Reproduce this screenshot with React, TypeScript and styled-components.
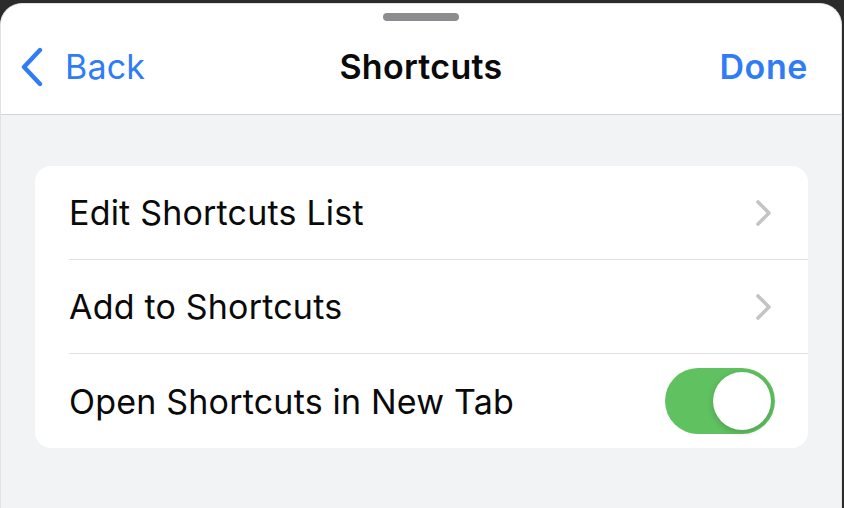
import React, { useState } from "react";
import styled, { createGlobalStyle } from "styled-components";

const Global = createGlobalStyle`
  html, body { margin: 0; padding: 0; background: #2b2b2b; }
  body { font-family: Inter, "Noto Sans", sans-serif; -webkit-font-smoothing: antialiased; }
`;

const Screen = styled.div`
  width: 844px;
  height: 508px;
  padding-top: 3px;
  padding-right: 2px;
  box-sizing: border-box;
  background: #2b2b2b;
  overflow: hidden;
`;

const Sheet = styled.div`
  height: 100%;
  background: #f2f3f5;
  border-radius: 22px 22px 0 0;
  border: 1px solid #e2e2e4;
  border-bottom: none;
  box-sizing: border-box;
  overflow: hidden;
  display: flex;
  flex-direction: column;
`;

const Header = styled.header`
  background: #ffffff;
  height: 111px;
  border-bottom: 1.5px solid #d4d4d6;
  box-sizing: border-box;
  display: flex;
  flex-direction: column;
  align-items: center;
`;

const Grabber = styled.div`
  width: 76px;
  height: 8px;
  border-radius: 4px;
  background: #8d8d8f;
  margin-top: 9px;
`;

const NavBar = styled.div`
  width: 100%;
  flex: 1;
  display: grid;
  grid-template-columns: 1fr auto 1fr;
  align-items: center;
  padding: 0 33px 2px 33px;
  box-sizing: border-box;
`;

const BackButton = styled.div`
  display: flex;
  align-items: center;
  gap: 20px;
  margin-left: -15px;
  color: #2f7cf6;
  font-size: 34px;
  letter-spacing: 0.2px;
`;

const Title = styled.div`
  font-size: 34px;
  font-weight: 600;
  color: #0a0a0a;
  letter-spacing: 0.3px;
`;

const Done = styled.div`
  justify-self: end;
  font-size: 34px;
  font-weight: 600;
  color: #2f7cf6;
  letter-spacing: 0.6px;
`;

const Content = styled.div`
  padding: 51px 33px 0 34px;
`;

const Card = styled.div`
  background: #ffffff;
  border-radius: 16px;
  overflow: hidden;
`;

const Row = styled.div<{ $last?: boolean }>`
  height: 94px;
  margin-left: 34px;
  padding-right: 34px;
  display: flex;
  align-items: center;
  justify-content: space-between;
  border-bottom: ${(p) => (p.$last ? "none" : "1.5px solid #e2e2e4")};
  box-sizing: border-box;
`;

const Label = styled.span`
  font-size: 34px;
  color: #0a0a0a;
  letter-spacing: 0.2px;
`;

const Toggle = styled.div<{ $on: boolean }>`
  width: 110px;
  height: 66px;
  border-radius: 33px;
  background: ${(p) => (p.$on ? "#5fc160" : "#e5e5ea")};
  position: relative;
  margin-right: -1px;
  cursor: pointer;
`;

const Knob = styled.div<{ $on: boolean }>`
  position: absolute;
  top: 4px;
  left: ${(p) => (p.$on ? "48px" : "4px")};
  width: 58px;
  height: 58px;
  border-radius: 50%;
  background: #ffffff;
  box-shadow: 0 2px 6px rgba(0, 0, 0, 0.18);
`;

const Chevron = () => (
  <svg width="18" height="28" viewBox="0 0 18 28" style={{ marginRight: 1 }}>
    <path d="M3 3 L14 14 L3 25" fill="none" stroke="#c4c4c7" strokeWidth="3.6" strokeLinecap="round" strokeLinejoin="round" />
  </svg>
);

const BackChevron = () => (
  <svg width="26" height="40" viewBox="0 0 26 40">
    <path d="M21 3 L5 20 L21 37" fill="none" stroke="#2f7cf6" strokeWidth="4.4" strokeLinecap="round" strokeLinejoin="round" />
  </svg>
);

export default function App() {
  const [on, setOn] = useState(true);
  return (
    <>
      <Global />
      <Screen>
        <Sheet>
          <Header>
            <Grabber />
            <NavBar>
              <BackButton>
                <BackChevron />
                Back
              </BackButton>
              <Title>Shortcuts</Title>
              <Done>Done</Done>
            </NavBar>
          </Header>
          <Content>
            <Card>
              <Row>
                <Label>Edit Shortcuts List</Label>
                <Chevron />
              </Row>
              <Row>
                <Label>Add to Shortcuts</Label>
                <Chevron />
              </Row>
              <Row $last>
                <Label>Open Shortcuts in New Tab</Label>
                <Toggle $on={on} onClick={() => setOn(!on)}>
                  <Knob $on={on} />
                </Toggle>
              </Row>
            </Card>
          </Content>
        </Sheet>
      </Screen>
    </>
  );
}
